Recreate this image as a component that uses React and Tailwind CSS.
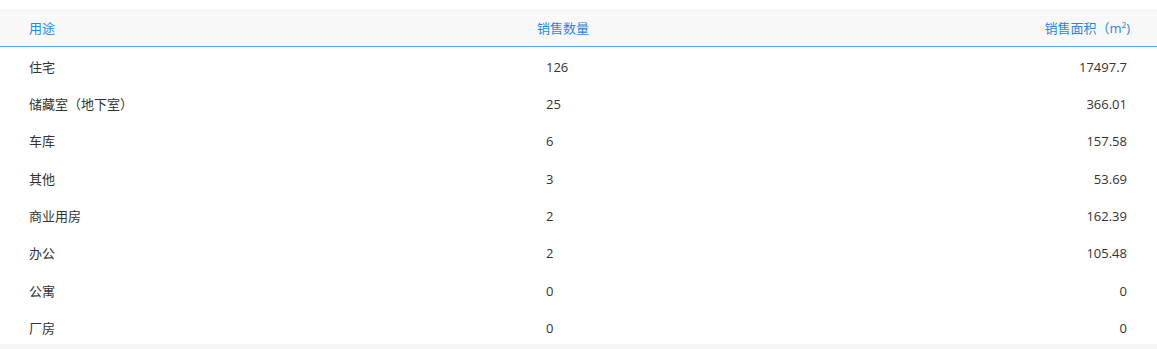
import React from "react";

const rows = [
  ["住宅", "126", "17497.7"],
  ["储藏室（地下室）", "25", "366.01"],
  ["车库", "6", "157.58"],
  ["其他", "3", "53.69"],
  ["商业用房", "2", "162.39"],
  ["办公", "2", "105.48"],
  ["公寓", "0", "0"],
  ["厂房", "0", "0"],
];

export default function App() {
  return (
    <div
      className="w-[1157px] h-[349px] bg-[#f4f5f7] text-[13px]"
      style={{ fontFamily: '"Open Sans", "Noto Sans CJK SC", sans-serif' }}
    >
      <div className="bg-white pt-[9px] h-[344px]">
        <div className="flex h-[37px] items-center pt-[2px] bg-[#f8f8f8] text-[#2b85e4]">
          <div className="w-[500px] pl-[29px]">用途</div>
          <div className="w-[126px] text-center">销售数量</div>
          <div className="flex-1 text-right pr-[27px]">销售面积（m²)</div>
        </div>
        <div className="h-px bg-[#5ba3ea]" />
        {rows.map((r) => (
          <div key={r[0]} className="flex h-[37.3px] items-center pt-[4px] text-[#333]">
            <div className="w-[500px] pl-[29px]">{r[0]}</div>
            <div className="w-[126px] pl-[46px]">{r[1]}</div>
            <div className="flex-1 text-right pr-[30px]">{r[2]}</div>
          </div>
        ))}
      </div>
    </div>
  );
}
